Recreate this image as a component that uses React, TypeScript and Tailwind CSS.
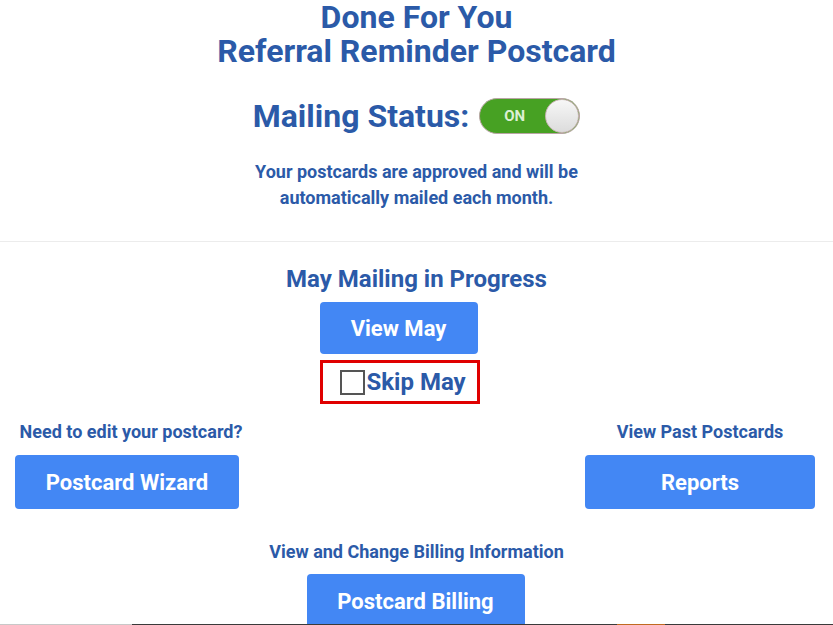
import React, { useState } from 'react';

const BLUE_TEXT = 'text-[#2b5aa8]';

export default function App() {
  const [on, setOn] = useState(true);
  const [skip, setSkip] = useState(false);

  return (
    <div className="relative h-[625px] overflow-hidden bg-white font-['Roboto','Liberation_Sans',sans-serif]">
      {/* Header */}
      <div className="flex flex-col items-center">
        <h1 className={`flex flex-col items-center text-[32px] font-bold leading-[34px] text-center ${BLUE_TEXT}`}>
          <span>Done For You</span>
          <span>Referral Reminder Postcard</span>
        </h1>

        <div className="mt-[28px] flex items-center gap-[10px]">
          <span className={`text-[32px] font-bold leading-[40px] ${BLUE_TEXT}`}>Mailing Status:</span>
          <button
            onClick={() => setOn(!on)}
            className={`relative h-[36px] w-[101px] rounded-full border border-[#b9a5a5] ${on ? 'bg-[#47a123]' : 'bg-[#ccc]'}`}
          >
            <span className="absolute left-[24px] top-[7px] text-[15px] font-bold leading-[20px] text-[#dcefd4]">
              {on ? 'ON' : 'OFF'}
            </span>
            <span
              className={`absolute top-[0px] h-[34px] w-[34px] rounded-full border border-[#c9b4b4] bg-gradient-to-b from-[#f7f7f7] to-[#dcdcdc] ${on ? 'right-[0px]' : 'left-[0px]'}`}
            />
          </button>
        </div>

        <p className={`mt-[23px] text-center text-[18px] font-bold leading-[26px] ${BLUE_TEXT}`}>
          Your postcards are approved and will be
          <br />
          automatically mailed each month.
        </p>
      </div>

      <div className="mt-[30px] h-px w-full bg-[#ececec]" />

      {/* Current mailing */}
      <div className="flex flex-col items-center pt-[22px]">
        <h2 className={`text-[24px] font-bold leading-[30px] ${BLUE_TEXT}`}>May Mailing in Progress</h2>
        <button className="mr-[36px] mt-[8px] h-[52px] w-[158px] rounded-[4px] bg-[#4387f4] text-[22px] font-bold text-white">
          View May
        </button>
        <label className="mr-[34px] mt-[6px] flex h-[44px] w-[160px] cursor-pointer items-center gap-[2px] border-[3px] border-[#e00000] pl-[17px]">
          <input
            type="checkbox"
            checked={skip}
            onChange={() => setSkip(!skip)}
            className="h-[25px] w-[25px] appearance-none border-2 border-[#555] bg-white"
          />
          <span className={`text-[24px] font-bold leading-[30px] ${BLUE_TEXT}`}>Skip May</span>
        </label>
      </div>

      {/* Wizard / Reports */}
      <div className="mt-[16px] flex justify-between pl-[15px] pr-[18px]">
        <div className="flex w-[228px] flex-col items-center">
          <span className={`ml-[4px] text-[18px] font-bold leading-[24px] ${BLUE_TEXT}`}>Need to edit your postcard?</span>
          <button className="mt-[11px] h-[54px] w-[224px] self-start rounded-[4px] bg-[#4387f4] text-[22px] font-bold text-white">
            Postcard Wizard
          </button>
        </div>
        <div className="flex w-[230px] flex-col items-center">
          <span className={`text-[18px] font-bold leading-[24px] ${BLUE_TEXT}`}>View Past Postcards</span>
          <button className="mt-[11px] h-[54px] w-[230px] rounded-[4px] bg-[#4387f4] text-[22px] font-bold text-white">
            Reports
          </button>
        </div>
      </div>

      {/* Billing */}
      <div className="mt-[31px] flex flex-col items-center">
        <span className={`text-[18px] font-bold leading-[24px] ${BLUE_TEXT}`}>View and Change Billing Information</span>
        <button className="mr-[2px] mt-[10px] h-[54px] w-[218px] rounded-[4px] bg-[#4387f4] text-[22px] font-bold text-white">
          Postcard Billing
        </button>
      </div>

      {/* bottom edge strip */}
      <div className="absolute bottom-0 left-0 flex h-px w-full">
        <div className="w-[132px] bg-[#c8c8c8]" />
        <div className="w-[485px] bg-[#3a3a3a]" />
        <div className="w-[48px] bg-[#c06a20]" />
        <div className="flex-1 bg-[#3a3a3a]" />
      </div>
    </div>
  );
}
